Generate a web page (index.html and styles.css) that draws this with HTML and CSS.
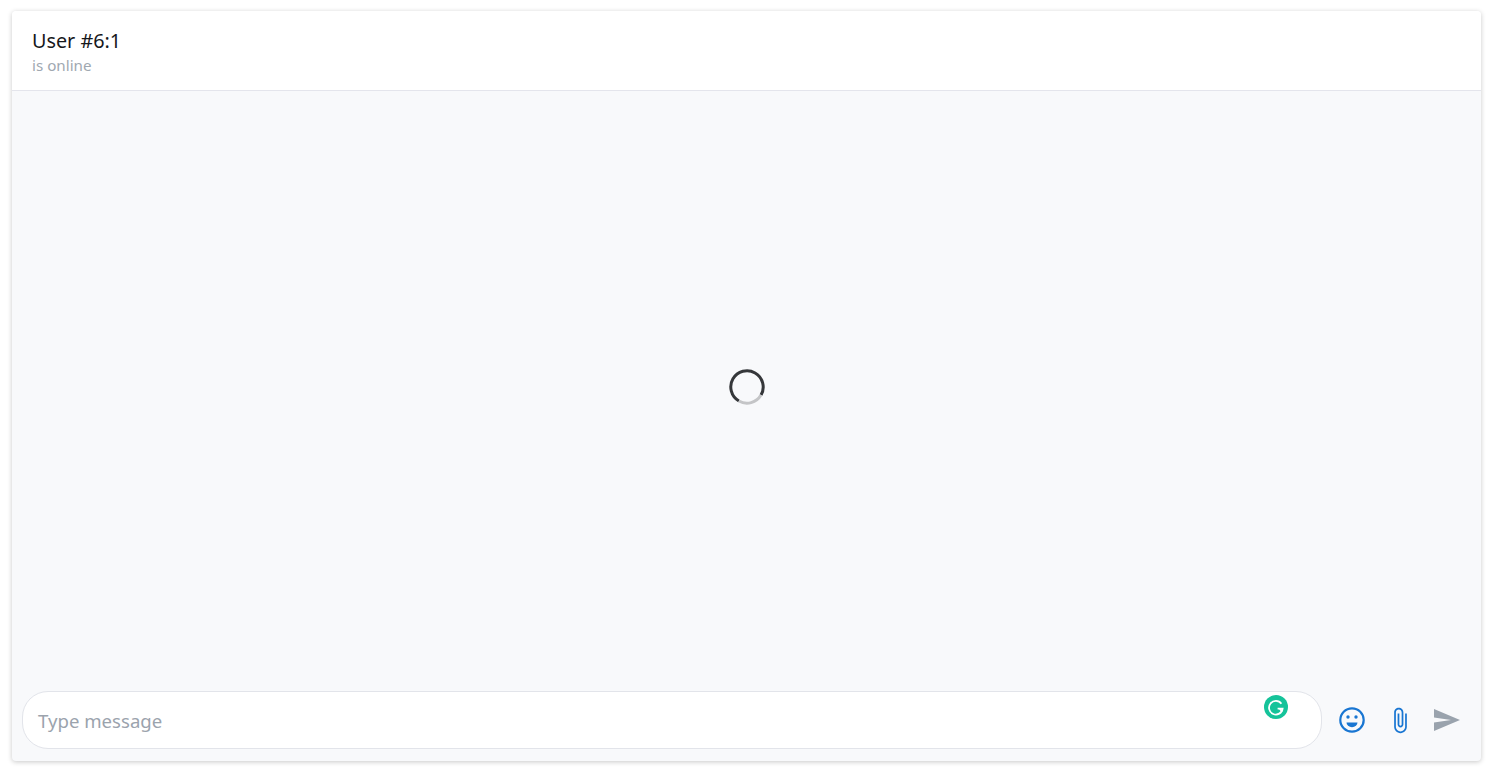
FILE: index.html
```html
<!DOCTYPE html>
<html lang="en">
<head>
    <meta charset="UTF-8">
    <meta name="viewport" content="width=device-width, initial-scale=1.0">
    <title>Chat</title>
    <link rel="stylesheet" href="styles.css">
</head>
<body>
    <div class="chat">
        <div class="chat-header">
            <div class="chat-title">User #6:1</div>
            <div class="chat-status">is online</div>
        </div>

        <div class="chat-body">
            <svg class="spinner" viewBox="0 0 36 36" fill="none" stroke-width="3">
                <path d="M9.900 32a16.200 16.200 0 1 1 22.100-5.900" stroke="#35373a"></path>
                <path d="M9.900 32a16.200 16.200 0 0 0 22.100-5.900" stroke="#c4c5c7"></path>
            </svg>
        </div>

        <div class="chat-footer">
            <div class="message-box">
                <span class="placeholder">Type message</span>
                <svg class="grammarly" viewBox="0 0 24 24">
                    <circle cx="12" cy="12" r="12" fill="#15c39a"></circle>
                    <path d="M17.400 8.800a6.800 6.800 0 1 0 1.200 4.800h-5" fill="none" stroke="#fff" stroke-width="1.800"></path>
                    <path d="M15.800 13.600l2.400 3" fill="none" stroke="#fff" stroke-width="1.800"></path>
                </svg>
            </div>
            <div class="actions">
                <button title="Emoji">
                    <svg class="icon" viewBox="0 0 26 26" fill="none">
                        <circle cx="13" cy="13" r="11.700" stroke="#1976d2" stroke-width="2.200"></circle>
                        <circle cx="9" cy="10" r="1.700" fill="#1976d2"></circle>
                        <circle cx="17" cy="10" r="1.700" fill="#1976d2"></circle>
                        <path d="M7.500 15.500h11a5.500 4.700 0 0 1-11 0z" fill="#1976d2"></path>
                    </svg>
                </button>
                <button class="clip-button" title="Attach">
                    <svg class="icon clip" viewBox="6 0.500 13 23">
                        <path d="M16.500 6v11.500c0 2.210-1.790 4-4 4s-4-1.790-4-4V5c0-1.380 1.120-2.500 2.500-2.500s2.500 1.120 2.500 2.500v10.500c0 .55-.45 1-1 1s-1-.45-1-1V6H10v9.500c0 1.380 1.120 2.500 2.500 2.500s2.500-1.120 2.500-2.500V5c0-2.210-1.790-4-4-4S7 2.790 7 5v12.500c0 3.040 2.460 5.500 5.500 5.500s5.500-2.460 5.500-5.500V6h-1.500z" fill="#1976d2"></path>
                    </svg>
                </button>
                <button title="Send">
                    <svg class="icon send" viewBox="0 0 26 22">
                        <path d="M0 0l26 11L0 22v-8.500l17-2.500L0 8.500z" fill="#9aa3ad"></path>
                    </svg>
                </button>
            </div>
        </div>
    </div>
</body>
</html>
```

FILE: styles.css
```css
* {
    margin: 0;
    padding: 0;
    box-sizing: border-box;
    font-family: "Noto Sans", "Open Sans", sans-serif;
}

html, body {
    height: 100%;
    overflow: hidden;
}

body {
    background-color: #fff;
    padding: 11px 9px 6px 12px;
}

.chat {
    height: 750px;
    display: flex;
    flex-direction: column;
    background-color: #f8f9fb;
    border-radius: 4px;
    box-shadow: 0 1px 5px rgba(0, 0, 0, 0.22);
}

.chat-header {
    height: 80px;
    padding: 16px 20px 0;
    background-color: #fff;
    border-bottom: 1px solid #e4e5ec;
    border-radius: 4px 4px 0 0;
}

.chat-title {
    font-size: 19.800px;
    line-height: 27px;
    color: #16181b;
}

.chat-status {
    font-size: 15.200px;
    line-height: 22px;
    color: #a0a8b1;
}

.chat-body {
    flex: 1;
    display: flex;
    align-items: center;
    justify-content: center;
    padding-bottom: 9px;
}

.spinner {
    width: 36px;
    height: 36px;
}

.chat-footer {
    display: flex;
    align-items: center;
    padding: 0 21px 12px 10px;
}

.message-box {
    position: relative;
    flex: 1;
    height: 58px;
    display: flex;
    align-items: center;
    padding-left: 15px;
    background-color: #fff;
    border: 1px solid #e2e4ea;
    border-radius: 26px;
}

.placeholder {
    font-size: 18.600px;
    color: #9ba3ad;
}

.grammarly {
    position: absolute;
    top: 3px;
    right: 33px;
    width: 24px;
    height: 24px;
}

.actions {
    display: flex;
    align-items: center;
    gap: 26px;
    margin-left: 17px;
}

button {
    background-color: transparent;
    border: none;
    cursor: pointer;
    display: flex;
    align-items: center;
    justify-content: center;
}

.clip-button {
    margin-left: 2px;
}

.icon {
    width: 26px;
    height: 26px;
}

.clip {
    width: 15px;
    height: 27px;
}

.send {
    width: 26px;
    height: 22px;
}
```
